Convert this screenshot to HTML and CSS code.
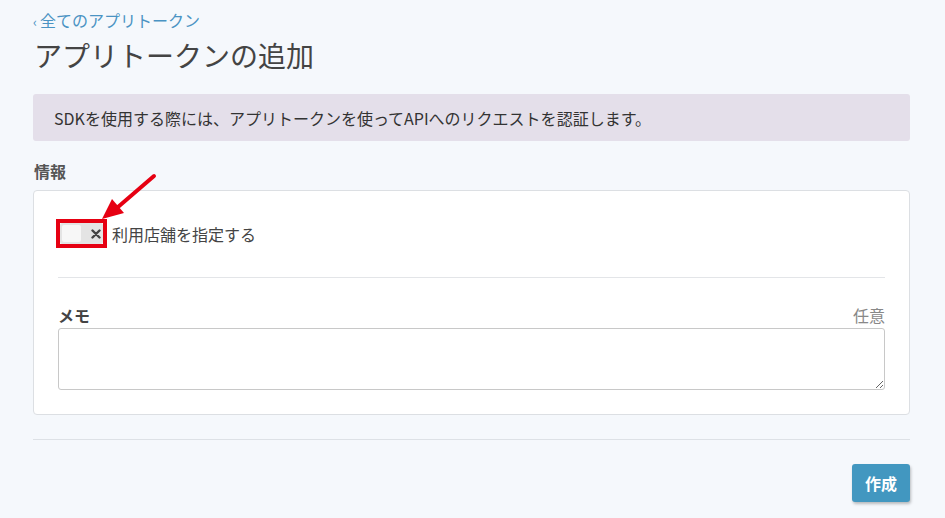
FILE: index.html
```html
<!DOCTYPE html>
<html lang="ja">
<head>
<meta charset="utf-8">
<link rel="stylesheet" href="styles.css">
</head>
<body>
<div class="page">
  <a class="back" href="#"><span class="chev">‹</span>全てのアプリトークン</a>
  <h1 class="title">アプリトークンの追加</h1>
  <div class="alert">SDKを使用する際には、アプリトークンを使ってAPIへのリクエストを認証します。</div>
  <div class="section-label">情報</div>
  <div class="card">
    <div class="toggle-row">
      <span class="highlight">
        <span class="toggle">
          <span class="knob"></span>
          <svg class="x" width="10" height="10" viewBox="0 0 10 10"><path d="M1.5 1.5 L8.5 8.5 M8.5 1.5 L1.5 8.5" stroke="#444" stroke-width="2.4" stroke-linecap="round"/></svg>
        </span>
      </span>
      <span class="toggle-label">利用店舗を指定する</span>
    </div>
    <hr class="sep">
    <div class="field-head">
      <span class="field-label">メモ</span>
      <span class="optional">任意</span>
    </div>
    <textarea class="memo"></textarea>
  </div>
  <hr class="divider">
  <div class="actions">
    <button class="btn">作成</button>
  </div>
  <svg class="arrow" width="80" height="60" viewBox="0 0 80 60">
    <path d="M56 4 L20 35" stroke="#e60012" stroke-width="4" stroke-linecap="round" fill="none"/>
    <polygon points="4,47 14,27 26,41" fill="#e60012"/>
  </svg>
</div>
</body>
</html>
```
FILE: styles.css
```css
* { box-sizing: border-box; }
html, body { margin: 0; padding: 0; }
body {
  background: #f5f8fc;
  font-family: "Noto Sans CJK JP", "Noto Sans", sans-serif;
  color: #333;
  width: 945px;
  height: 518px;
  overflow: hidden;
}
.page {
  position: relative;
  padding: 10px 35px 0 33px;
}
.back {
  display: block;
  color: #4a93c3;
  font-size: 16px;
  line-height: 20px;
  text-decoration: none;
}
.chev { font-size: 13px; margin-right: 3px; }
.title {
  margin: 3px 0 0 1px;
  font-size: 28px;
  font-weight: 400;
  line-height: 40px;
  color: #444;
}
.alert {
  margin-top: 19px;
  background: #e4dfea;
  border-radius: 3px;
  height: 47px;
  padding: 0 21px;
  display: flex;
  align-items: center;
  font-size: 16px;
  color: #333;
}
.section-label {
  margin-top: 19px;
  font-size: 16px;
  font-weight: 700;
  color: #555;
  line-height: 22px;
  padding-left: 1px;
}
.card {
  margin-top: 8px;
  background: #fff;
  border: 1px solid #dcdfe3;
  border-radius: 4px;
  padding: 28px 24px 24px 24px;
}
.toggle-row {
  display: flex;
  align-items: center;
  gap: 5px;
}
.highlight {
  display: inline-flex;
  border: 4px solid #e60012;
  padding: 0;
  width: 51px;
  height: 29px;
  margin-left: -2px;
}
.toggle {
  display: flex;
  align-items: center;
  width: 100%;
  height: 100%;
  background: #e4e4e4;
  border-radius: 2px;
  padding: 2px;
}
.knob {
  width: 19px;
  height: 100%;
  background: #f7f7f7;
  border-radius: 2px;
}
.x {
  margin-left: 10px;
  display: block;
}
.toggle-label {
  font-size: 16px;
  color: #444;
}
.sep {
  border: 0;
  border-top: 1px solid #e3e5e8;
  margin: 29px 0 0 0;
}
.field-head {
  display: flex;
  justify-content: space-between;
  align-items: baseline;
  margin-top: 25px;
  line-height: 24px;
}
.field-label {
  font-size: 16px;
  font-weight: 700;
  color: #444;
}
.optional {
  font-size: 16px;
  color: #888;
}
.memo {
  display: block;
  width: 100%;
  height: 62px;
  margin-top: 1px;
  border: 1px solid #c8c8c8;
  border-radius: 3px;
  background: #fff;
  resize: vertical;
}
.divider {
  border: 0;
  border-top: 1px solid #dde1e6;
  margin: 24px 0 0 0;
}
.actions {
  display: flex;
  justify-content: flex-end;
  margin-top: 24px;
}
.btn {
  width: 58px;
  height: 38px;
  background: #4297c0;
  color: #fff;
  border: 0;
  border-radius: 3px;
  font-family: inherit;
  font-size: 16px;
  font-weight: 700;
  box-shadow: 1px 2px 3px rgba(0,0,0,0.25);
}
.arrow {
  position: absolute;
  left: 98px;
  top: 172px;
}
```
